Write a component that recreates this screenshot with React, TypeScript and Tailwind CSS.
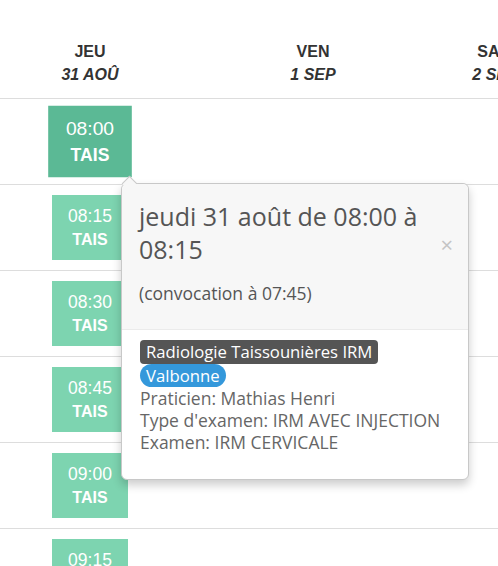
import React from "react";

const slots = ["08:00", "08:15", "08:30", "08:45", "09:00", "09:15"];

const days = [
  { name: "JEU", date: "31 AOÛ", width: "w-[180px]" },
  { name: "VEN", date: "1 SEP", width: "w-[266px]" },
  { name: "SAM", date: "2 SEP", width: "w-[98px]" },
];

export default function App() {
  return (
    <div className="relative w-[498px] h-[566px] overflow-hidden bg-white font-['Liberation_Sans',Arial,sans-serif]">
      {/* column headers */}
      <div className="flex pt-[40px] pb-[12px] border-b border-[#ddd] text-[#333] text-[16px] leading-[23px] font-bold">
        {days.map((d) => (
          <div key={d.name} className={`${d.width} shrink-0 text-center whitespace-nowrap`}>
            <div>{d.name}</div>
            <div className="italic">{d.date}</div>
          </div>
        ))}
      </div>

      {/* time slots */}
      {slots.map((t, i) => (
        <div key={t} className="flex h-[86px] border-b border-[#ddd]">
          <div className="w-[180px] shrink-0 flex justify-center">
            <div
              className={
                i === 0
                  ? "mt-[10px] w-[76px] h-[65px] bg-[#5bb995] text-white flex flex-col items-center scale-110"
                  : "mt-[10px] w-[76px] h-[65px] bg-[#7dd4b0] text-white flex flex-col items-center"
              }
            >
              <div className="text-[17.5px] leading-[22px] mt-[10px]">{t}</div>
              <div className="text-[16px] leading-[20px] font-bold mt-[3px]">TAIS</div>
            </div>
          </div>
        </div>
      ))}

      {/* popover */}
      <div className="absolute left-[121px] top-[183px] w-[348px] rounded-[6px] border border-[#c8c8c8] bg-white shadow-[0_5px_10px_rgba(0,0,0,0.2)] font-['Open_Sans',sans-serif]">
        <div className="absolute -top-[6px] left-[2px] w-[11px] h-[11px] rotate-45 bg-[#f7f7f7] border-t border-l border-[#c8c8c8]" />
        <div className="relative rounded-t-[6px] bg-[#f7f7f7] border-b border-[#ebebeb] pl-[17px] pr-[40px] pt-[16px] pb-[25px]">
          <div className="text-[25px] leading-[33px] text-[#555]">jeudi 31 août de 08:00 à 08:15</div>
          <div className="mt-[16px] text-[17.5px] leading-[22px] text-[#555]">(convocation à 07:45)</div>
          <span className="absolute right-[15px] top-[49px] text-[22px] leading-[22px] text-[#c4c4c4]">×</span>
        </div>
        <div className="px-[18px] pt-[9px] pb-[26px] text-[17.5px] leading-[22px] text-[#666]">
          <div className="leading-[24px]">
            <span className="inline-block bg-[#555] text-white rounded-[4px] px-[6px] text-[16.7px] leading-[24px]">
              Radiologie Taissounières IRM
            </span>
          </div>
          <div className="leading-[23px]">
            <span className="inline-block bg-[#3498db] text-white rounded-full px-[6px] text-[16.7px] leading-[23px]">
              Valbonne
            </span>
          </div>
          <div>Praticien: Mathias Henri</div>
          <div>Type d'examen: IRM AVEC INJECTION</div>
          <div>Examen: IRM CERVICALE</div>
        </div>
      </div>
    </div>
  );
}
